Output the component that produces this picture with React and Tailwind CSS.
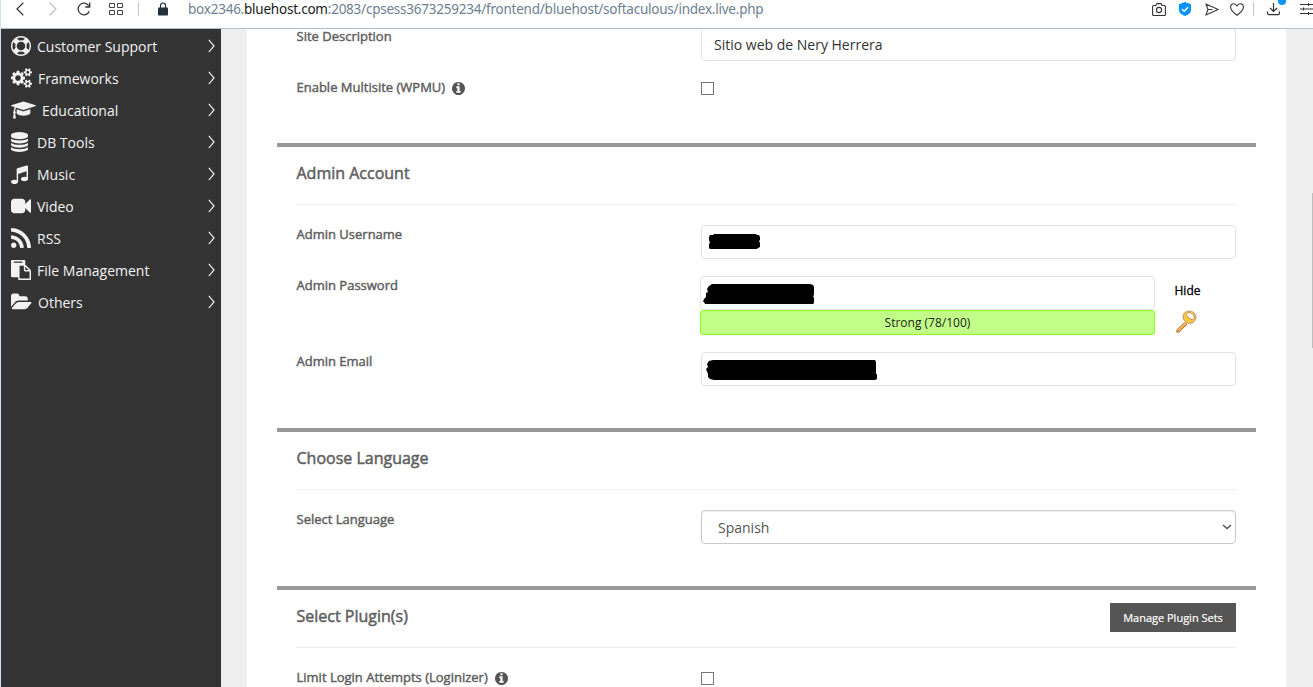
import React from "react";

const ICONS = {
  ring: {
    box: "0 0 1792 1792",
    cls: "w-[20px] h-[20px]",
    d: "M896 0q182 0 348 71t286 191 191 286 71 348-71 348-191 286-286 191-348 71-348-71-286-191-191-286-71-348 71-348 191-286 286-191 348-71zm0 128q-190 0-361 90l194 194q82-28 167-28t167 28l194-194q-171-90-361-90zm-678 1129l194-194q-28-82-28-167t28-167l-194-194q-90 171-90 361t90 361zm678 407q190 0 361-90l-194-194q-82 28-167 28t-167-28l-194 194q171 90 361 90zm0-384q159 0 271.5-112.5t112.5-271.5-112.5-271.5-271.5-112.5-271.5 112.5-112.5 271.5 112.5 271.5 271.5 112.5zm484-217l194 194q90-171 90-361t-90-361l-194 194q28 82 28 167t-28 167z",
  },
  cogs: {
    box: "0 0 1920 1792",
    cls: "w-[21px] h-[20px]",
    d: "M896 896q0-106-75-181t-181-75-181 75-75 181 75 181 181 75 181-75 75-181zm768 512q0-52-38-90t-90-38-90 38-38 90q0 53 37.5 90.5t90.5 37.5 90.5-37.5 37.5-90.5zm0-1024q0-52-38-90t-90-38-90 38-38 90q0 53 37.5 90.5t90.5 37.5 90.5-37.5 37.5-90.5zm-384 421v185q0 10-7 19.5t-16 10.5l-155 24q-11 35-32 76 34 48 90 115 7 11 7 20 0 12-7 19-23 30-82.5 89.5t-78.5 59.5q-11 0-21-7l-115-90q-37 19-77 31-11 108-23 155-7 24-30 24h-186q-11 0-20-7.5t-10-17.5l-23-153q-34-10-75-31l-118 89q-7 7-20 7-11 0-21-8-144-133-144-160 0-9 7-19 10-14 41-53t47-61q-23-44-35-82l-152-24q-10-1-17-9.5t-7-19.5v-185q0-10 7-19.5t16-10.5l155-24q11-35 32-76-34-48-90-115-7-11-7-20 0-12 7-20 22-30 82-89t79-59q11 0 21 7l115 90q34-18 77-32 11-108 23-154 7-24 30-24h186q11 0 20 7.5t10 17.5l23 153q34 10 75 31l118-89q8-7 20-7 11 0 21 8 144 133 144 160 0 8-7 19-12 16-42 54t-45 60q23 48 34 82l152 23q10 2 17 10.5t7 19.5zm640 533v140q0 16-149 31-12 27-30 52 51 113 51 138 0 4-4 7-122 71-124 71-8 0-46-47t-52-68q-20 2-30 2t-30-2q-14 21-52 68t-46 47q-2 0-124-71-4-3-4-7 0-25 51-138-18-25-30-52-149-15-149-31v-140q0-16 149-31 13-29 30-52-51-113-51-138 0-4 4-7 4-2 35-20t59-34 30-16q8 0 46 46.5t52 67.5q20-2 30-2t30 2q51-71 92-112l6-2q4 0 124 70 4 3 4 7 0 25-51 138 17 23 30 52 149 15 149 31zm0-1024v140q0 16-149 31-12 27-30 52 51 113 51 138 0 4-4 7-122 71-124 71-8 0-46-47t-52-68q-20 2-30 2t-30-2q-14 21-52 68t-46 47q-2 0-124-71-4-3-4-7 0-25 51-138-18-25-30-52-149-15-149-31v-140q0-16 149-31 13-29 30-52-51-113-51-138 0-4 4-7 4-2 35-20t59-34 30-16q8 0 46 46.5t52 67.5q20-2 30-2t30 2q51-71 92-112l6-2q4 0 124 70 4 3 4 7 0 25-51 138 17 23 30 52 149 15 149 31z",
  },
  cap: {
    box: "0 0 2304 1792",
    cls: "w-[25px] h-[20px]",
    d: "M1774 836l18 316q4 69-82 128t-235 93.5-323 34.5-323-34.5-235-93.5-82-128l18-316 574 181q22 7 48 7t48-7zm530-324q0 23-22 31l-1120 352q-4 1-10 1t-10-1l-652-206q-43 34-71 111.5t-34 178.5q63 36 63 109 0 69-58 107l58 433q2 14-8 25-9 11-24 11h-192q-15 0-24-11-10-11-8-25l58-433q-58-38-58-107 0-73 65-111 11-207 98-330l-333-104q-22-8-22-31t22-31l1120-352q4-1 10-1t10 1l1120 352q22 8 22 31z",
  },
  database: {
    box: "0 0 1536 1792",
    cls: "w-[17px] h-[20px]",
    d: "M768 768q237 0 443-43t325-127v170q0 69-103 128t-280 93.5-385 34.5-385-34.5-280-93.5-103-128v-170q119 84 325 127t443 43zm0 768q237 0 443-43t325-127v170q0 69-103 128t-280 93.5-385 34.5-385-34.5-280-93.5-103-128v-170q119 84 325 127t443 43zm0-384q237 0 443-43t325-127v170q0 69-103 128t-280 93.5-385 34.5-385-34.5-280-93.5-103-128v-170q119 84 325 127t443 43zm0-1152q208 0 385 34.5t280 93.5 103 128v128q0 69-103 128t-280 93.5-385 34.5-385-34.5-280-93.5-103-128v-128q0-69 103-128t280-93.5 385-34.5z",
  },
  music: {
    box: "0 0 1536 1792",
    cls: "w-[17px] h-[20px]",
    d: "M1536 224v1120q0 50-34 89t-86 60.5-103.5 32-96.5 10.5-96.5-10.5-103.5-32-86-60.5-34-89 34-89 86-60.5 103.5-32 96.5-10.5q105 0 192 39v-537l-768 237v709q0 50-34 89t-86 60.5-103.5 32-96.5 10.5-96.5-10.5-103.5-32-86-60.5-34-89 34-89 86-60.5 103.5-32 96.5-10.5q105 0 192 39v-967q0-31 19-56.5t49-35.5l832-256q12-4 28-4 40 0 68 28t28 68z",
  },
  video: {
    box: "0 0 1792 1792",
    cls: "w-[20px] h-[20px]",
    d: "M1792 352v1088q0 42-39 59-13 5-25 5-27 0-45-19l-403-403v166q0 119-84.5 203.5t-203.5 84.5h-704q-119 0-203.5-84.5t-84.5-203.5v-704q0-119 84.5-203.5t203.5-84.5h704q119 0 203.5 84.5t84.5 203.5v165l403-402q18-19 45-19 12 0 25 5 39 17 39 59z",
  },
  rss: {
    box: "0 128 1408 1408",
    cls: "w-[20px] h-[20px]",
    d: "M384 1344q0 80-56 136t-136 56-136-56-56-136 56-136 136-56 136 56 56 136zm512 123q2 28-17 48-18 21-47 21h-135q-25 0-43-16.5t-20-41.5q-22-229-184.5-391.5t-391.5-184.5q-25-2-41.5-20t-16.5-43v-135q0-29 21-47 17-17 43-17h5q160 13 306 80.5t259 181.5q114 113 181.5 259t80.5 306zm512 2q2 27-18 47-18 20-46 20h-143q-26 0-44.5-17.5t-19.5-42.5q-12-215-101-408.5t-231.5-336-336-231.5-408.5-102q-25-1-42.5-19.5t-17.5-43.5v-143q0-28 20-46 18-18 44-18h3q262 13 501.5 120t425.5 294q187 186 294 425.5t120 501.5z",
  },
  paste: {
    box: "0 0 1792 1792",
    cls: "w-[20px] h-[20px]",
    d: "M768 1664h896v-640h-416q-40 0-68-28t-28-68v-416h-384v1152zm256-1440v-64q0-13-9.5-22.5t-22.5-9.5h-704q-13 0-22.5 9.5t-9.5 22.5v64q0 13 9.5 22.5t22.5 9.5h704q13 0 22.5-9.5t9.5-22.5zm256 672h299l-299-299v299zm512 128v672q0 40-28 68t-68 28h-960q-40 0-68-28t-28-68v-160h-544q-40 0-68-28t-28-68v-1344q0-40 28-68t68-28h1088q40 0 68 28t28 68v328q21 13 36 28l408 408q28 28 48 76t20 88z",
  },
  folder: {
    box: "0 0 1920 1792",
    cls: "w-[21px] h-[20px]",
    d: "M1879 952q0 31-31 66l-336 396q-43 51-120.5 86.5t-143.5 35.5h-1088q-34 0-60.5-13t-26.5-43q0-31 31-66l336-396q43-51 120.5-86.5t143.5-35.5h1088q34 0 60.5 13t26.5 43zm-343-344v160h-832q-94 0-197 47.5t-164 119.5l-337 396-5 6q0-4-.5-12.5t-.5-12.5v-960q0-92 66-158t158-66h320q92 0 158 66t66 158v32h544q92 0 158 66t66 158z",
  },
};

const MENU = [
  { icon: "ring", label: "Customer Support", slot: "w-[26px]" },
  { icon: "cogs", label: "Frameworks", slot: "w-[27px]" },
  { icon: "cap", label: "Educational", slot: "w-[31px]" },
  { icon: "database", label: "DB Tools", slot: "w-[26px]" },
  { icon: "music", label: "Music", slot: "w-[26px]" },
  { icon: "video", label: "Video", slot: "w-[26px]" },
  { icon: "rss", label: "RSS", slot: "w-[26px]" },
  { icon: "paste", label: "File Management", slot: "w-[26px]" },
  { icon: "folder", label: "Others", slot: "w-[27px]" },
];

function Sidebar() {
  return (
    <nav className="w-[220px] shrink-0 bg-[#333333] pt-[2px] text-[#f2f2f2]">
      {MENU.map((m) => {
        const icon = ICONS[m.icon];
        return (
          <div key={m.label} className="flex h-8 items-center pr-[6px] pl-[10px]">
            <span className={"shrink-0 pb-[2px] " + m.slot}>
              <svg viewBox={icon.box} preserveAspectRatio="none" className={"block " + icon.cls} fill="currentColor">
                <path d={icon.d} />
              </svg>
            </span>
            <span className="flex-1 text-[14px] leading-8 whitespace-nowrap">{m.label}</span>
            <svg viewBox="0 0 7 14" className="mb-[2px] h-[14px] w-[7px]" fill="none" stroke="#e8e8e8" strokeWidth="1.2">
              <path d="M.8.8 6 7 .8 13.2" />
            </svg>
          </div>
        );
      })}
    </nav>
  );
}

function Toolbar() {
  return (
    <header className="flex h-[29px] shrink-0 border-b border-[#afbfce] bg-white">
      <div className="flex h-[18px] w-full items-center text-[#2f3a44]">
        <svg viewBox="0 0 8 14" className="ml-[15px] h-[14px] w-[8px] shrink-0" fill="none" stroke="#333" strokeWidth="1.2">
          <path d="M7.3.8 1 7l6.300 6.200" />
        </svg>
        <svg viewBox="0 0 8 14" className="ml-[25px] h-[14px] w-[8px] shrink-0" fill="none" stroke="#c0c0c0" strokeWidth="1.200">
          <path d="M.7.8 7 7 .7 13.200" />
        </svg>
        <svg viewBox="0 0 14 14" className="ml-[20px] h-[14px] w-[14px] shrink-0" fill="none" stroke="#333" strokeWidth="1.300">
          <path d="M12.300 9.200A5.800 5.800 0 1 1 11.800 3.800" />
          <path d="M12.700.6V5H8.300" />
        </svg>
        <svg viewBox="0 0 14 12" className="ml-[18px] h-[12px] w-[14px] shrink-0" fill="none" stroke="#444">
          <path d="M.5.500h5v4h-5zM8.500.500h5v4h-5zM.5 7.500h5v4h-5zM8.500 7.500h5v4h-5z" />
        </svg>
        <div className="ml-[15px] h-[14px] w-px shrink-0 bg-[#c4c4c4]" />
        <svg viewBox="0 0 10 14" className="ml-[19px] h-[14px] w-[10px] shrink-0">
          <path d="M2.500 6V3.500a2.500 2.500 0 0 1 5 0V6" fill="none" stroke="#24303b" strokeWidth="1.200" />
          <rect y="5.500" width="10" height="8" rx=".8" fill="#24303b" />
        </svg>
        <div className="ml-[20px] flex-1 font-['Noto_Sans',sans-serif] text-[13.5px] leading-[18px] tracking-[-0.23px] whitespace-nowrap text-[#6d7f91]">
          box2346.<span className="text-[#1b1b1b]">bluehost.com</span>:2083/cpsess3673259234/frontend/bluehost/softaculous/index.live.php
        </div>
        <svg viewBox="0 0 14 13" className="h-[13px] w-[14px] shrink-0" fill="none" stroke="#333" strokeWidth="1.100">
          <path d="M1.600 2.500h2.200L4.900.6h4.200l1.100 1.900h2.200q1 0 1 1v8q0 1-1 1H1.600q-1 0-1-1v-8q0-1 1-1z" />
          <circle cx="7" cy="7" r="2.600" />
        </svg>
        <svg viewBox="0 0 12 14" className="ml-[13px] h-[14px] w-[12px] shrink-0">
          <path d="M6 0l6 2.200V8c0 3-3 5-6 6C3 13 0 11 0 8V2.200z" fill="#0a94fb" />
          <path d="M3 7.200l2.200 2L9 5.300" fill="none" stroke="#fff" strokeWidth="1.500" />
        </svg>
        <svg viewBox="0 0 14 13" className="ml-[14px] h-[13px] w-[14px] shrink-0" fill="none" stroke="#3a3a3a" strokeWidth="1.100" strokeLinejoin="round">
          <path d="M.8.900 13.200 6.500.8 12.100l2.200-5.600zM3 6.500h4.500" />
        </svg>
        <svg viewBox="0 0 14 13" className="ml-[11px] h-[13px] w-[14px] shrink-0" fill="none" stroke="#333" strokeWidth="1.100">
          <path d="M7 12.200C3.500 9.500.6 7.500.6 4.200.6 2 2 .7 3.800.7 5.300.7 6.400 1.500 7 2.900 7.600 1.500 8.700.7 10.200.7c1.800 0 3.200 1.300 3.200 3.500 0 3.300-2.900 5.300-6.400 8z" />
        </svg>
        <div className="ml-[9px] h-[14px] w-px shrink-0 bg-[#c4c4c4]" />
        <svg viewBox="0 0 20 18" className="ml-[13px] h-[18px] w-[20px] shrink-0" fill="none" stroke="#333" strokeWidth="1.200">
          <path d="M6.500 3v8.500M3 8l3.500 3.500L10 8M.6 11.500v2q0 1.200 1.200 1.200h9.400q1.200 0 1.200-1.200v-2" />
          <circle cx="15" cy="1" r="4" fill="#0a94fb" stroke="none" />
        </svg>
        <svg viewBox="0 0 13 12" className="ml-[13px] h-[12px] w-[13px] shrink-0" fill="none" stroke="#333">
          <path d="M0 1.500h13M0 6h13M0 10.500h13M8.500 0v3M3.500 4.500v3M8.500 9v3" />
        </svg>
      </div>
    </header>
  );
}

function Info() {
  return (
    <svg viewBox="128 128 1536 1536" className="ml-[7px] h-[13px] w-[13px] translate-y-px" fill="#555">
      <path d="M1152 1376v-160q0-14-9-23t-23-9h-96v-512q0-14-9-23t-23-9h-320q-14 0-23 9t-9 23v160q0 14 9 23t23 9h96v320h-96q-14 0-23 9t-9 23v160q0 14 9 23t23 9h448q14 0 23-9t9-23zm-128-896v-160q0-14-9-23t-23-9h-192q-14 0-23 9t-9 23v160q0 14 9 23t23 9h192q14 0 23-9t9-23zm640 416q0 209-103 385.500t-279.500 279.500-385.500 103-385.500-103-279.500-279.500-103-385.500 103-385.500 279.500-279.500 385.500-103 385.500 103 279.500 279.500 103 385.500z" />
    </svg>
  );
}

function Row({ label, info, line = "h-[19px] leading-[19px]", className, children }) {
  return (
    <div className={"flex items-start " + className}>
      <div
        className={
          "flex w-[405px] shrink-0 items-center pl-[0.5px] text-[13px] whitespace-nowrap text-[#5f5f5f] [-webkit-text-stroke:0.45px_#5f5f5f] " +
          line
        }
      >
        {label}
        {info && <Info />}
      </div>
      {children}
    </div>
  );
}

function Section({ title, action, className, children }) {
  return (
    <section className={"border-t-4 border-[#999999] pr-[20px] pl-[19px] " + className}>
      <div className="flex h-[58px] items-start justify-between border-b border-[#eeeeee]">
        <h2 className="pt-[14px] pl-[0.5px] text-[16px] leading-6 text-[#5f5f5f] [-webkit-text-stroke:0.5px_#5f5f5f]">{title}</h2>
        {action}
      </div>
      {children}
    </section>
  );
}

function Checkbox() {
  return <span className="h-[13px] w-[13px] border border-[#767676] bg-white" />;
}

const FIELD = "flex h-[34px] items-center rounded-[4px] border border-[#e3e3e3] bg-white";

function Key() {
  return (
    <svg viewBox="0 0 22 24" className="mt-[10px] ml-px h-[24px] w-[22px]">
      <path d="M9.500 12.500 2.200 19.500 1.800 22.300 4.300 21.800 12 14.300z" fill="#ef9a2f" stroke="#a87545" strokeWidth="1" />
      <path d="M10.500 13 3.200 20.300" stroke="#ffc865" strokeWidth="1.200" />
      <path
        fillRule="evenodd"
        d="M8.600 4.200C10 1.200 14.500.400 17.500 1.800c3 1.500 4.200 5 2.800 8-1.300 3-5 4.300-8 3-3.300-1.200-5.200-5.400-3.700-8.600zM11.700 3.800c-1 1 .6 3 2.700 4.500s4 1.500 4.500.2c.7-2-.4-4.400-2.400-5.200-1.900-.8-3.800-.5-4.800.5z"
        fill="#fbc644"
        stroke="#b38a5c"
        strokeWidth=".9"
      />
    </svg>
  );
}

export default function App() {
  return (
    <div className="flex h-[687px] w-[1313px] flex-col overflow-hidden border-l border-[#cfdfee] bg-white font-['Open_Sans','Noto_Sans',sans-serif]">
      <Toolbar />
      <div className="flex min-h-0 flex-1">
        <Sidebar />
        <div className="flex min-w-0 flex-1 bg-[#efefef] pl-[26px]">
          <main className="w-[1039px] shrink-0 overflow-hidden bg-white pr-[30px] pl-[30px]">
            <div className="h-[114px] pr-[20px] pl-[19px]">
              <Row label="Site Description" line="h-[15px] leading-[15px]" className="h-[49px]">
                <div className={FIELD + " -mt-[2px] w-[535px] pl-[12px] text-[14px] text-[#333]"}>Sitio web de Nery Herrera</div>
              </Row>
              <Row label="Enable Multisite (WPMU)" info className="h-[19px]">
                <div className="flex pt-[4px]"><Checkbox /></div>
              </Row>
            </div>

            <Section title="Admin Account" className="h-[285px]">
              <Row label="Admin Username" className="mt-[20px] h-[51px]">
                <div className={FIELD + " w-[535px]"}>
                  <svg viewBox="0 0 53 17" className="ml-[6px] h-[17px] w-[53px]">
                    <path d="M2 1h3l1-1h42l1 1h2l1 2v3l-1 1 1 2v4l-2 1-1 1H2l-1-1V10l1-1-1-3V3z" />
                  </svg>
                </div>
              </Row>
              <Row label="Admin Password" className="h-[76px]">
                <div className="-ml-px w-[455px]">
                  <div className={FIELD}>
                    <svg viewBox="0 0 112 20" className="mt-[2px] ml-[2px] h-[20px] w-[112px]">
                      <path d="M6 2l3-2h98l3 1 1 2v8l-1 1 1 2v5l-1 1H2l-1-2H0l1-3 2-2V9l2-1-1-3z" />
                    </svg>
                  </div>
                  <div className="h-[25px] rounded-[3px] border border-[#8cff1a] bg-[#c2ff88] text-center text-[12px] leading-[23px] text-[#222]">
                    Strong (78/100)
                  </div>
                </div>
                <div className="ml-[19px] pt-[6px]">
                  <div className="pl-[0.5px] text-[12px] leading-[18px] text-black [-webkit-text-stroke:0.3px_#000]">Hide</div>
                  <Key />
                </div>
              </Row>
              <Row label="Admin Email" className="h-[34px]">
                <div className={FIELD + " w-[535px]"}>
                  <svg viewBox="0 0 172 20" className="mt-[2px] ml-[4px] h-[20px] w-[172px]">
                    <path d="M3 1l4-1h162l1 2v12h1v5l-2 1H8l-4-1-2-2v-3L0 9l2-2-1-3z" />
                  </svg>
                </div>
              </Row>
            </Section>

            <Section title="Choose Language" className="h-[158px]">
              <Row label="Select Language" className="mt-[20px]">
                <div className="flex h-[34px] w-[535px] items-center justify-between rounded-[4px] border border-[#c9c9c9] pr-[3px] pl-[16px] text-[14px] text-[#555] shadow-[inset_0_1px_1px_rgba(0,0,0,0.075)]">
                  Spanish
                  <svg viewBox="0 0 10 6" className="h-[6px] w-[10px]" fill="none" stroke="#555" strokeWidth="1.500">
                    <path d="M1 1l4 3.500L9 1" />
                  </svg>
                </div>
              </Row>
            </Section>

            <Section
              title="Select Plugin(s)"
              action={
                <button className="mt-[13px] h-[29px] w-[126px] bg-[#555555] text-[11px] leading-[29px] whitespace-nowrap text-white [-webkit-text-stroke:0.2px_#fff]">
                  Manage Plugin Sets
                </button>
              }
              className=""
            >
              <Row label="Limit Login Attempts (Loginizer)" info className="mt-[20px]">
                <div className="flex pt-[4px]"><Checkbox /></div>
              </Row>
            </Section>
          </main>
          <div className="ml-auto mt-[164px] h-[155px] w-px bg-[#bdbdbd]" />
        </div>
      </div>
    </div>
  );
}
